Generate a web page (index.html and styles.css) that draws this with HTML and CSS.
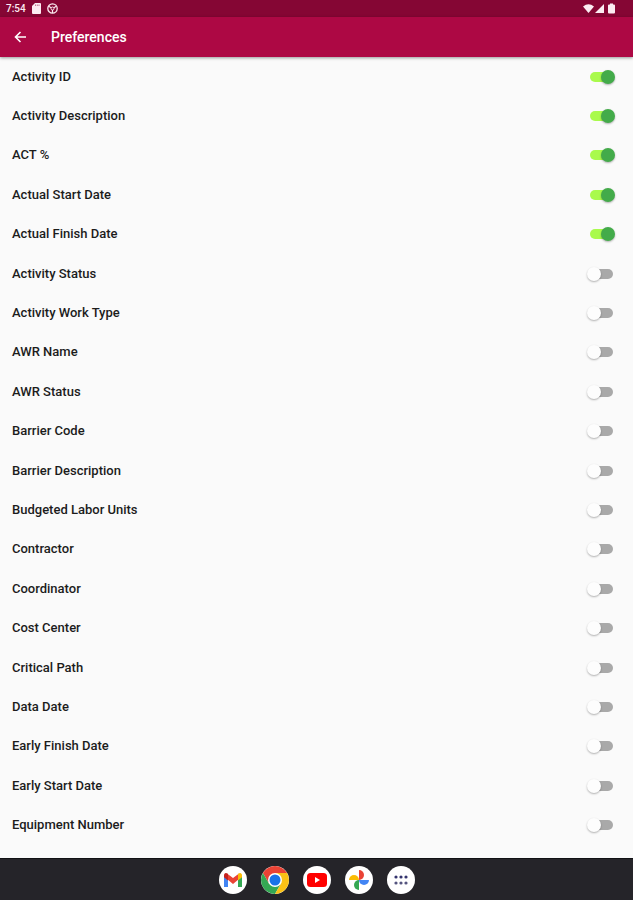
FILE: index.html
```html
<!DOCTYPE html>
<html lang="en">
<head>
<meta charset="utf-8">
<meta name="viewport" content="width=device-width, initial-scale=1">
<title>Preferences</title>
<link rel="stylesheet" href="styles.css">
</head>
<body>
<div class="status">
  <span class="clock">7:54</span>
  <svg width="9" height="11" viewBox="0 0 9 11"><path fill="currentColor" d="M3 0h5a1 1 0 0 1 1 1v9a1 1 0 0 1-1 1H1a1 1 0 0 1-1-1V3z"/><path stroke="#850634" stroke-width=".5" d="M3.500 1.500v1.500M5.300 1.500v1.500M7 1.500v1.500"/></svg>
  <svg width="11" height="11" viewBox="0 0 11 11" fill="none" stroke="currentColor"><circle cx="5.500" cy="5.500" r="4.700" stroke-width="1.300"/><circle cx="5.500" cy="5.500" r="1.500" stroke-width="1"/><path d="M5.500 7v3M4.200 4.700L1.700 3.300M6.800 4.700l2.500-1.400" stroke-width="1.200"/></svg>
  <svg class="signals" width="33" height="11" viewBox="0 0 33 11" fill="currentColor"><path d="M1 3.600Q6.500-1 12 3.600L6.500 10z"/><path d="M22 1v9h-9z"/><path d="M27 1.500h1V.5h3v1h1a1 1 0 0 1 1 1V9.500a1 1 0 0 1-1 1h-5a1 1 0 0 1-1-1v-7a1 1 0 0 1 1-1z"/></svg>
</div>
<header class="appbar">
  <button class="back" type="button" aria-label="Back"><svg width="14" height="14" viewBox="0 0 14 14" fill="none" stroke="currentColor" stroke-width="1.600"><path d="M13 7H2.500M7.500 2l-5 5 5 5"/></svg></button>
  <h1>Preferences</h1>
</header>
<main class="list">
  <label class="row">Activity ID<input type="checkbox" class="switch" checked></label>
  <label class="row">Activity Description<input type="checkbox" class="switch" checked></label>
  <label class="row">ACT %<input type="checkbox" class="switch" checked></label>
  <label class="row">Actual Start Date<input type="checkbox" class="switch" checked></label>
  <label class="row">Actual Finish Date<input type="checkbox" class="switch" checked></label>
  <label class="row">Activity Status<input type="checkbox" class="switch"></label>
  <label class="row">Activity Work Type<input type="checkbox" class="switch"></label>
  <label class="row">AWR Name<input type="checkbox" class="switch"></label>
  <label class="row">AWR Status<input type="checkbox" class="switch"></label>
  <label class="row">Barrier Code<input type="checkbox" class="switch"></label>
  <label class="row">Barrier Description<input type="checkbox" class="switch"></label>
  <label class="row">Budgeted Labor Units<input type="checkbox" class="switch"></label>
  <label class="row">Contractor<input type="checkbox" class="switch"></label>
  <label class="row">Coordinator<input type="checkbox" class="switch"></label>
  <label class="row">Cost Center<input type="checkbox" class="switch"></label>
  <label class="row">Critical Path<input type="checkbox" class="switch"></label>
  <label class="row">Data Date<input type="checkbox" class="switch"></label>
  <label class="row">Early Finish Date<input type="checkbox" class="switch"></label>
  <label class="row">Early Start Date<input type="checkbox" class="switch"></label>
  <label class="row">Equipment Number<input type="checkbox" class="switch"></label>
</main>
<nav class="dock">
  <button class="app" type="button" aria-label="Gmail"><svg width="20" height="16" viewBox="0 0 20 16"><path fill="#4285f4" d="M1 4v11h4V7z"/><path fill="#34a853" d="M15 7v8h4V4z"/><path fill="#ea4335" d="M4 1.500l6 4.500 6-4.500V7l-6 5-6-5z"/><path fill="#c5221f" d="M1 3.500C1 1 3 .3 5 2v6.500L1 5.300z"/><path fill="#fbbc04" d="M19 3.500C19 1 17 .3 15 2v6.500l4-3.200z"/></svg></button>
  <button class="app" type="button" aria-label="Chrome"><svg width="28" height="28" viewBox="0 0 28 28"><path fill="#ea4335" d="M14 7h12.100A14 14 0 0 0 1.900 7L8 17.500 14 14z"/><path fill="#34a853" d="M1.900 7A14 14 0 0 0 14 28l6-10.500-6-3.500-6 3.500z"/><path fill="#fbc116" d="M26.100 7A14 14 0 0 1 14 28l6-10.500L14 14V7z"/><circle cx="14" cy="14" r="7" fill="#fff"/><circle cx="14" cy="14" r="5.500" fill="#1a73e8"/></svg></button>
  <button class="app" type="button" aria-label="YouTube"><svg width="20" height="16" viewBox="0 0 20 16"><rect y="1" width="20" height="14" rx="3.500" fill="#f00"/><path fill="#fff" d="M8 5v6l5-3z"/></svg></button>
  <button class="app" type="button" aria-label="Photos"><svg width="22" height="22" viewBox="0 0 22 22"><path fill="#ea4335" d="M11 11V1a5 5 0 0 1 0 10z"/><path fill="#4285f4" d="M11 11h10a5 5 0 0 1-10 0z"/><path fill="#34a853" d="M11 11v10a5 5 0 0 1 0-10z"/><path fill="#fbbc04" d="M11 11H1a5 5 0 0 1 10 0z"/></svg></button>
  <button class="app" type="button" aria-label="All apps"><svg width="14" height="10" viewBox="0 0 14 10" fill="#34346e"><circle cx="2" cy="2" r="1.600"/><circle cx="7" cy="2" r="1.600"/><circle cx="12" cy="2" r="1.600"/><g fill="#55557f"><circle cx="2" cy="8" r="1.600"/><circle cx="7" cy="8" r="1.600"/><circle cx="12" cy="8" r="1.600"/></g></svg></button>
</nav>
</body>
</html>
```
FILE: styles.css
```css
* { box-sizing: border-box; }

body {
  margin: 0;
  min-height: 100vh;
  display: flex;
  flex-direction: column;
  background: #fafafa;
  color: #1c1c1c;
  font-family: Roboto, "Liberation Sans", sans-serif;
}

button {
  border: 0;
  padding: 0;
  background: none;
  color: inherit;
}

svg { display: block; }

.status {
  height: 17px;
  display: flex;
  align-items: center;
  gap: 6px;
  padding: 0 18px 0 6px;
  background: #850634;
  color: #fcecf2;
}

.clock {
  font-size: 10px;
  font-weight: 500;
  line-height: 16px;
}

.signals { margin-left: auto; }

.appbar {
  height: 40px;
  display: flex;
  align-items: center;
  gap: 24px;
  padding: 0 13px;
  background: #ad0844;
  color: #fff;
  box-shadow: 0 1px 3px rgba(0, 0, 0, 0.4);
}

h1 {
  margin: 0;
  font-size: 14px;
  font-weight: 500;
  line-height: 20px;
}

.list {
  flex: 1;
  display: grid;
  grid-auto-rows: 1fr;
  padding: 0 18px 13px 12px;
}

.row {
  display: flex;
  align-items: center;
  justify-content: space-between;
  font-size: 13px;
  font-weight: 500;
  line-height: 16px;
}

.switch {
  appearance: none;
  width: 28px;
  height: 14px;
  margin: 0;
  display: grid;
  align-items: center;
}

.switch::before,
.switch::after {
  content: "";
  grid-area: 1 / 1;
}

.switch::before {
  height: 10px;
  margin: 0 2px 0 3px;
  border-radius: 5px;
  background: #a9a9a9;
}

.switch::after {
  width: 14px;
  height: 14px;
  border-radius: 50%;
  background: #fdfdfd;
  box-shadow: 0 1px 2px rgba(0, 0, 0, 0.3);
}

.switch:checked::before { background: #a9fa4c; }

.switch:checked::after {
  justify-self: end;
  background: #43ab4a;
}

.dock {
  height: 42px;
  display: flex;
  align-items: center;
  justify-content: center;
  gap: 14px;
  border-top: 1px solid #111114;
  background: #252429;
}

.app {
  width: 28px;
  height: 28px;
  display: grid;
  place-items: center;
  border-radius: 50%;
  background: #fff;
}
```
